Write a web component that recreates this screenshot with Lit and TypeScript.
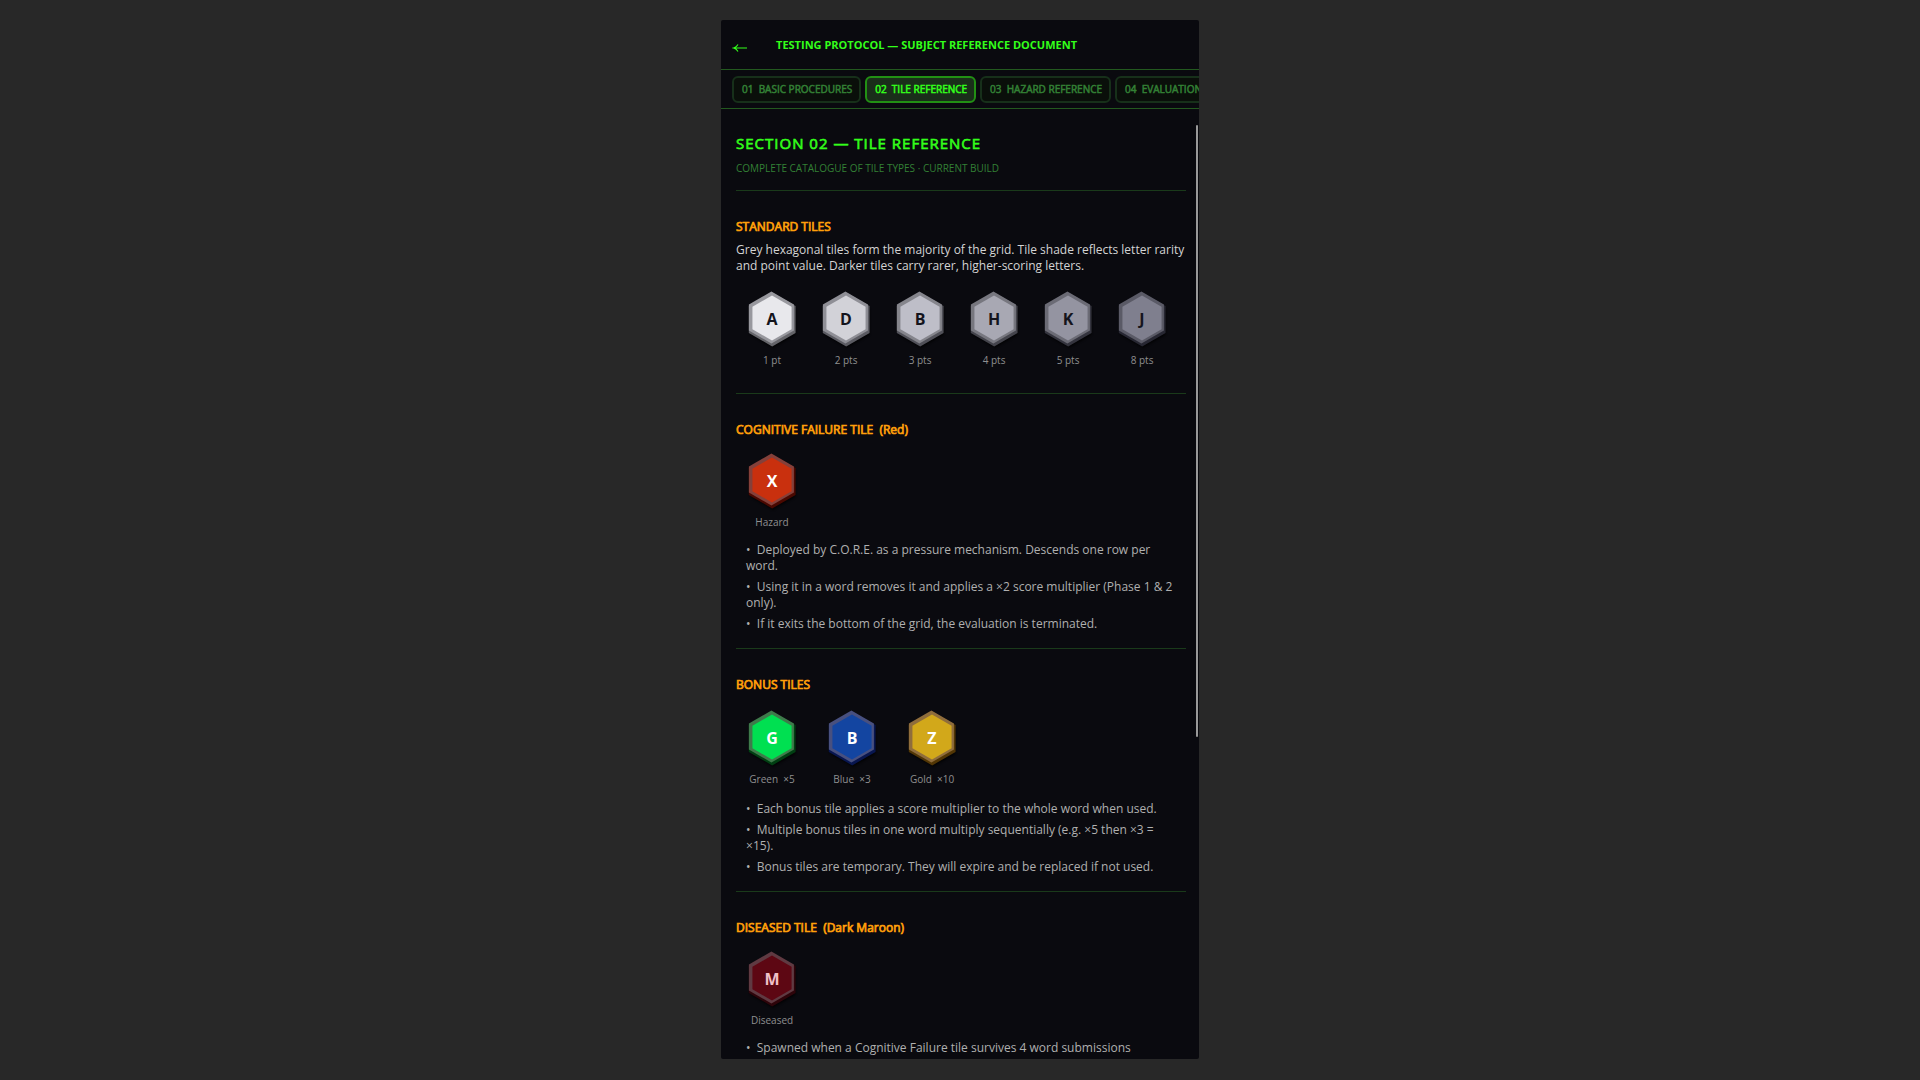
import { LitElement, html, css, nothing } from "lit";
import { classMap } from "lit/directives/class-map.js";

interface Tile {
  letter: string;
  label: string;
  tone: string;
}

interface Section {
  title: string;
  text?: string;
  roomy?: boolean;
  wide?: boolean;
  tiles: Tile[];
  notes: string[];
}

const TABS = [
  "01\u00a0 BASIC PROCEDURES",
  "02\u00a0 TILE REFERENCE",
  "03\u00a0 HAZARD REFERENCE",
  "04\u00a0 EVALUATION PHASES",
];

const SECTIONS: Section[] = [
  {
    title: "STANDARD TILES",
    text: "Grey hexagonal tiles form the majority of the grid. Tile shade reflects letter rarity and point value. Darker tiles carry rarer, higher-scoring letters.",
    roomy: true,
    tiles: [
      { letter: "A", label: "1 pt", tone: "grey1" },
      { letter: "D", label: "2 pts", tone: "grey2" },
      { letter: "B", label: "3 pts", tone: "grey3" },
      { letter: "H", label: "4 pts", tone: "grey4" },
      { letter: "K", label: "5 pts", tone: "grey5" },
      { letter: "J", label: "8 pts", tone: "grey6" },
    ],
    notes: [],
  },
  {
    title: "COGNITIVE FAILURE TILE\u00a0 (Red)",
    tiles: [{ letter: "X", label: "Hazard", tone: "red" }],
    notes: [
      "Deployed by C.O.R.E. as a pressure mechanism. Descends one row per word.",
      "Using it in a word removes it and applies a ×2 score multiplier (Phase 1 & 2 only).",
      "If it exits the bottom of the grid, the evaluation is terminated.",
    ],
  },
  {
    title: "BONUS TILES",
    roomy: true,
    wide: true,
    tiles: [
      { letter: "G", label: "Green\u00a0 ×5", tone: "green" },
      { letter: "B", label: "Blue\u00a0 ×3", tone: "blue" },
      { letter: "Z", label: "Gold\u00a0 ×10", tone: "gold" },
    ],
    notes: [
      "Each bonus tile applies a score multiplier to the whole word when used.",
      "Multiple bonus tiles in one word multiply sequentially (e.g. ×5 then ×3 = ×15).",
      "Bonus tiles are temporary. They will expire and be replaced if not used.",
    ],
  },
  {
    title: "DISEASED TILE\u00a0 (Dark Maroon)",
    tiles: [{ letter: "M", label: "Diseased", tone: "maroon" }],
    notes: ["Spawned when a Cognitive Failure tile survives 4 word submissions"],
  },
];

/** Corner list of a pointy-top hexagon. */
function hexagon(cx: number, cy: number, r: number): string {
  return [0, 1, 2, 3, 4, 5]
    .map((i) => {
      const a = (Math.PI / 3) * i - Math.PI / 2;
      return `${(cx + r * Math.cos(a)).toFixed(2)},${(cy + r * Math.sin(a)).toFixed(2)}`;
    })
    .join(" ");
}

class HexTile extends LitElement {
  static properties = {
    letter: {},
    label: {},
    tone: {},
  };

  declare letter: string;
  declare label: string;
  declare tone: string;

  static styles = css`
    :host {
      display: block;
    }
    .tile {
      display: flex;
      flex-direction: column;
      align-items: center;
      gap: 5px;
      margin: 0;
      --ink: #14141c;
    }
    .hex {
      display: block;
      width: 60px;
      height: 60px;
      overflow: visible;
    }
    .shadow { fill: #000; filter: blur(1px); opacity: 0.7; }
    .depth { fill: var(--depth); }
    .bevel { fill: var(--bevel); }
    .face { fill: var(--face); }
    .letter {
      fill: var(--ink);
      font: 700 16px "Open Sans", sans-serif;
      text-anchor: middle;
    }
    .label {
      color: #8f8f8f;
      font-size: 10px;
      line-height: 14px;
      white-space: nowrap;
    }
    .grey1 { --face: #e8e8ec; --bevel: #98989e; --depth: #646469; }
    .grey2 { --face: #d2d2d8; --bevel: #8f8f96; --depth: #5b5b62; }
    .grey3 { --face: #bebec8; --bevel: #85858c; --depth: #505058; }
    .grey4 { --face: #a8a8b3; --bevel: #77777f; --depth: #44444c; }
    .grey5 { --face: #9494a1; --bevel: #6b6b75; --depth: #34343e; }
    .grey6 { --face: #7f7f8e; --bevel: #5a5a66; --depth: #272732; }
    .red { --face: #c9300e; --bevel: #84403a; --depth: #4a0800; --ink: #fff; }
    .green { --face: #00e051; --bevel: #3f7a4b; --depth: #003f12; --ink: #fff; }
    .blue { --face: #1345a1; --bevel: #48507f; --depth: #081650; --ink: #fff; }
    .gold { --face: #d2a81a; --bevel: #8f6d3c; --depth: #523605; --ink: #fff; }
    .maroon { --face: #5d0713; --bevel: #5f3a42; --depth: #2e040a; --ink: #f0c0c8; }
  `;

  render() {
    return html`
      <figure class="tile ${this.tone}">
        <svg class="hex" viewBox="0 0 60 60" role="img" aria-label=${this.letter}>
          <polygon class="shadow" points=${hexagon(31, 34, 26)}></polygon>
          <polygon class="depth" points=${hexagon(30.2, 31.4, 27)}></polygon>
          <polygon class="bevel" points=${hexagon(29.4, 29.5, 26)}></polygon>
          <polygon class="face" points=${hexagon(30, 30, 22.6)}></polygon>
          <text class="letter" x="30" y="37">${this.letter}</text>
        </svg>
        <figcaption class="label">${this.label}</figcaption>
      </figure>
    `;
  }
}
customElements.define("hex-tile", HexTile);

class AppRoot extends LitElement {
  static properties = { active: { state: true } };

  declare active: number;

  constructor() {
    super();
    this.active = 1;
  }

  static styles = css`
    :host {
      display: flex;
      justify-content: center;
      box-sizing: border-box;
      height: 100vh;
      padding: 20px 20px 21px;
      background: #282828;
      color: #d4d4d4;
      font-family: "Open Sans", "Noto Sans", sans-serif;
      font-size: 12px;
      line-height: 16px;
    }
    .panel {
      display: flex;
      flex-direction: column;
      height: 100%;
      aspect-ratio: 46 / 100;
      overflow: hidden;
      border-radius: 2px;
      background: #0a0a0f;
    }
    .header {
      display: flex;
      align-items: center;
      gap: 12px;
      height: 49px;
      flex: none;
      padding: 0 11px;
      border-bottom: 1px solid #23591f;
    }
    .back {
      display: flex;
      align-items: center;
      width: 32px;
      height: 32px;
      padding: 6px 0 0;
      border: 0;
      background: none;
      color: #33ff1a;
      cursor: pointer;
    }
    .arrow { width: 16px; height: 10px; }
    .title {
      margin: 0;
      color: #33ff1a;
      font-size: 11px;
      font-weight: 700;
      line-height: 16px;
      white-space: nowrap;
    }
    .tabs {
      display: flex;
      flex: none;
      gap: 4px;
      padding: 6px 11px 5px;
      overflow: hidden;
      border-bottom: 1px solid #23591f;
    }
    .tab {
      flex: none;
      height: 27px;
      padding: 0 7px 1px 8px;
      border: 2px solid #17301a;
      border-radius: 6px;
      background: #0a0f0a;
      color: #338035;
      font: inherit;
      font-size: 10px;
      -webkit-text-stroke: 0.05em currentColor;
      white-space: nowrap;
      cursor: pointer;
    }
    .tab.active {
      border-color: #229014;
      background: #1a2e1a;
      color: #33ff1a;
    }
    .body {
      display: flex;
      flex: 1;
      min-height: 0;
    }
    .content {
      flex: 1;
      min-width: 0;
      padding: 24px 10px 0 15px;
      overflow-y: auto;
      scrollbar-width: none;
    }
    .scroll {
      flex: none;
      width: 2px;
      margin: 16px 1px 0 0;
    }
    .thumb {
      height: 65.5%;
      border-radius: 1px;
      background: #999;
    }
    .heading {
      margin: 0 0 8px;
      color: #33ff1a;
      font-size: 15px;
      font-weight: 400;
      line-height: 20px;
      letter-spacing: 1px;
      -webkit-text-stroke: 0.04em currentColor;
    }
    .sub {
      margin: 0;
      color: #338035;
      font-size: 10px;
      line-height: 14px;
    }
    .rule {
      height: 1px;
      margin: 15px 0 28px;
      border: 0;
      background: #1a3a1a;
    }
    .section + .rule { margin-top: 16px; }
    .section.bare + .rule { margin-top: 26px; }
    .name {
      margin: 0;
      color: #ff9f0a;
      font-size: 12px;
      font-weight: 400;
      line-height: 16px;
      -webkit-text-stroke: 0.06em currentColor;
    }
    .text { margin: 7px 0 0; }
    .row {
      display: flex;
      gap: 2px;
      padding: 12px 0 13px;
    }
    .row.roomy { padding: 14px 0 15px; }
    .row.wide { gap: 8px; }
    .section.bare .row { padding-bottom: 0; }
    .cell { flex: 0 0 72px; }
    .notes {
      display: flex;
      flex-direction: column;
      gap: 5px;
      margin: 0 10px;
      padding: 0;
      list-style: none;
      color: #b0b0b0;
    }
  `;

  private section(s: Section, index: number) {
    return html`
      ${index ? html`<hr class="rule" />` : nothing}
      <section class=${classMap({ section: true, bare: !s.notes.length })}>
        <h3 class="name">${s.title}</h3>
        ${s.text ? html`<p class="text">${s.text}</p>` : nothing}
        <div class=${classMap({ row: true, roomy: !!s.roomy, wide: !!s.wide })}>
          ${s.tiles.map(
            (t) => html`<hex-tile class="cell" .letter=${t.letter} .label=${t.label} .tone=${t.tone}></hex-tile>`,
          )}
        </div>
        ${s.notes.length
          ? html`<ul class="notes">
              ${s.notes.map((n) => html`<li>${"•\u00a0 " + n}</li>`)}
            </ul>`
          : nothing}
      </section>
    `;
  }

  render() {
    return html`
      <main class="panel">
        <header class="header">
          <button class="back" aria-label="Back">
            <svg class="arrow" viewBox="0 0 16 10" fill="none" stroke="currentColor" stroke-width="1.1">
              <path d="M2 5H15M6 1.6Q4.6 4.2 1.6 5Q4.6 5.8 6 8.4"></path>
            </svg>
          </button>
          <h1 class="title">TESTING PROTOCOL — SUBJECT REFERENCE DOCUMENT</h1>
        </header>
        <nav class="tabs">
          ${TABS.map(
            (t, i) => html`<button
              class=${classMap({ tab: true, active: i === this.active })}
              @click=${() => (this.active = i)}
            >${t}</button>`,
          )}
        </nav>
        <div class="body">
          <div class="content">
            <h2 class="heading">SECTION 02 — TILE REFERENCE</h2>
            <p class="sub">COMPLETE CATALOGUE OF TILE TYPES · CURRENT BUILD</p>
            <hr class="rule" />
            ${SECTIONS.map((s, i) => this.section(s, i))}
          </div>
          <div class="scroll"><div class="thumb"></div></div>
        </div>
      </main>
    `;
  }
}
customElements.define("app-root", AppRoot);
